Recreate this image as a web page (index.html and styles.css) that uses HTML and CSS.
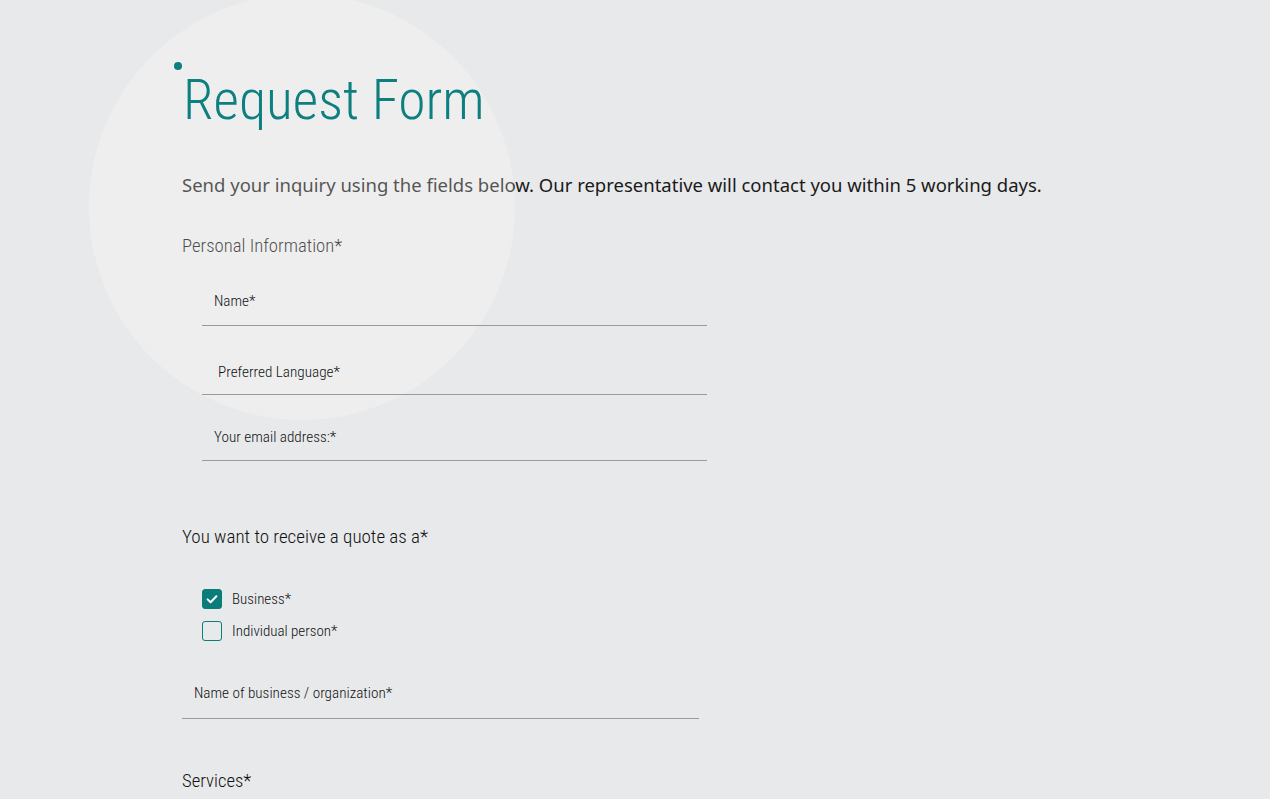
FILE: index.html
```html
<!DOCTYPE html>
<html lang="en">
<head>
<meta charset="utf-8">
<title>Request Form</title>
<link rel="stylesheet" href="styles.css">
</head>
<body>
<main class="page">
  <div class="glow" aria-hidden="true"></div>
  <h1 class="title">Request Form</h1>
  <p class="intro">Send your inquiry using the fields below. Our representative will contact you within 5 working days.</p>

  <h2 class="section section--muted">Personal Information*</h2>
  <div class="fields">
    <label class="field field--name"><span class="field-label">Name*</span></label>
    <label class="field field--lang"><span class="field-label field-label--wide">Preferred Language*</span></label>
    <label class="field field--email"><span class="field-label">Your email address:*</span></label>
  </div>

  <h2 class="section section--quote">You want to receive a quote as a*</h2>
  <div class="choices">
    <div class="choice">
      <span class="box box--checked">
        <svg viewBox="0 0 20 20" width="20" height="20"><path d="M5.6 10.4 L8.6 13.3 L14.4 7.2" fill="none" stroke="#fff" stroke-width="2" stroke-linecap="round" stroke-linejoin="round"/></svg>
      </span>
      <span class="choice-label">Business*</span>
    </div>
    <div class="choice">
      <span class="box"></span>
      <span class="choice-label">Individual person*</span>
    </div>
  </div>

  <label class="field field--org"><span class="field-label">Name of business / organization*</span></label>

  <h2 class="section section--services">Services*</h2>
</main>
</body>
</html>
```
FILE: styles.css
```css
html, body {
  margin: 0;
  padding: 0;
  background: #e8e9eb;
  height: 100%;
  overflow: hidden;
}

.page {
  position: relative;
  padding: 68px 0 0 182px;
  font-family: Roboto, "Liberation Sans", sans-serif;
  font-stretch: 75%;
  font-variation-settings: "wdth" 75;
  color: #1a1a1a;
}

.glow {
  position: absolute;
  left: 89px;
  top: -6px;
  width: 426px;
  height: 426px;
  border-radius: 50%;
  background: rgba(255, 255, 250, 0.25);
  z-index: 1;
  pointer-events: none;
}

.title {
  position: relative;
  z-index: 2;
  margin: 0;
  font-size: 55.5px;
  line-height: 66px;
  font-weight: 300;
  color: #0c7f7e;
  padding-left: 1px;
}

.title::before {
  content: "";
  position: absolute;
  left: -8px;
  top: -6px;
  width: 8px;
  height: 8px;
  border-radius: 50%;
  background: #0c7f7e;
}

.intro {
  margin: 38px 0 0;
  font-family: "Noto Sans", "Open Sans", sans-serif;
  font-stretch: 100%;
  font-variation-settings: normal;
  font-size: 18.5px;
  line-height: 26px;
  color: #1a1a1a;
}

.section {
  margin: 0;
  font-size: 19px;
  line-height: 24px;
  font-weight: 300;
  color: #111;
}

.section--muted { margin-top: 36px; font-size: 18.7px; }
.section--quote { margin-top: 64px; }
.section--services { margin-top: 50px; font-size: 18.7px; }

.fields {
  position: relative;
  z-index: 2;
  padding-left: 20px;
}

.field {
  display: block;
  width: 505px;
  border-bottom: 1px solid #9a9a9b;
}

.field-label {
  display: block;
  padding-left: 12px;
  font-size: 15.2px;
  line-height: 20px;
  font-weight: 300;
  color: #111;
}

.field-label--wide { padding-left: 16px; }

.field--name { padding: 33px 0 14px; }
.field--lang { padding: 36px 0 12px; }
.field--email { padding: 32px 0 13px; }
.field--org { width: 517px; padding: 42px 0 15px; }

.choices {
  margin-top: 40px;
  padding-left: 20px;
  display: flex;
  flex-direction: column;
  gap: 12px;
}

.choice {
  display: flex;
  align-items: center;
  gap: 10px;
  height: 20px;
}

.box {
  box-sizing: border-box;
  width: 20px;
  height: 20px;
  border: 1px solid #0a7c79;
  border-radius: 3px;
  display: flex;
}

.box--checked {
  background: #0a7c79;
  border-color: #0a7c79;
}

.box svg { margin: -1px; }

.choice-label {
  font-size: 15px;
  line-height: 20px;
  font-weight: 300;
  color: #111;
}
```
